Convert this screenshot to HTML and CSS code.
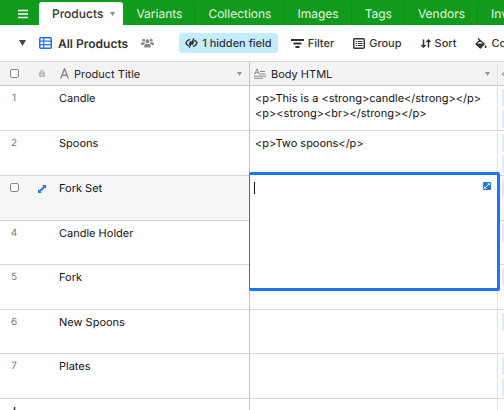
FILE: index.html
```html
<!DOCTYPE html>
<html lang="en">
<head>
  <meta charset="UTF-8" />
  <meta name="viewport" content="width=device-width, initial-scale=1.0"/>
  <title>Products - All Products</title>
  <link rel="stylesheet" href="styles.css">
</head>
<body>
  <nav class="tabs">
    <button type="button" class="menu-btn" aria-label="Menu">
      <svg width="10" height="10" viewBox="0 0 10 10"><path d="M0 1.5h10M0 5h10M0 8.5h10" stroke="#fff" stroke-width="1.6"/></svg>
    </button>
    <a href="#products" class="tab active">Products
      <svg width="5" height="4" viewBox="0 0 5 4"><path d="M0 0h5L2.5 4z" fill="#888"/></svg>
    </a>
    <a href="#variants" class="tab">Variants</a>
    <a href="#collections" class="tab">Collections</a>
    <a href="#images" class="tab">Images</a>
    <a href="#tags" class="tab">Tags</a>
    <a href="#vendors" class="tab">Vendors</a>
    <a href="#inventory" class="tab">Inventory</a>
  </nav>

  <div class="toolbar">
    <button type="button" class="view-btn">
      <svg class="caret" width="7" height="6" viewBox="0 0 7 6"><path d="M0 0h7L3.5 6z" fill="#444"/></svg>
      <svg width="13" height="12" viewBox="0 0 13 12"><rect x=".75" y=".75" width="11.5" height="10.5" rx="1" fill="none" stroke="#1f74f5" stroke-width="1.5"/><path d="M1 4.2h11M1 7.7h11M4.8 1v10" stroke="#1f74f5" stroke-width="1.2"/></svg>
      <span class="view-name">All Products</span>
      <svg width="13" height="10" viewBox="0 0 13 10" fill="#888"><circle cx="6.5" cy="3.2" r="1.9"/><circle cx="2.7" cy="2.2" r="1.4"/><circle cx="10.3" cy="2.2" r="1.4"/><path d="M3.2 9.5V8c0-1.3.9-2.2 2.2-2.2h2.2c1.3 0 2.2.9 2.2 2.2v1.5zM0 7V5.8C0 4.8.7 4.2 1.7 4.2h2l.5 1C3 5.7 2.6 6.2 2.4 7zM13 7V5.8c0-1-.7-1.6-1.7-1.6h-2l-.5 1c1.2.5 1.6 1 1.8 1.8z"/></svg>
    </button>
    <button type="button" class="tool hidden-fields">
      <svg width="13" height="10" viewBox="0 0 13 10" fill="none" stroke="#333" stroke-width="1.4" stroke-linecap="round"><path d="M4.5 1.7C3 2.2 1.7 3.3.8 5c.6 1.1 1.4 2 2.4 2.6M8.5 8.3C10 7.8 11.3 6.7 12.2 5c-.6-1.1-1.4-2-2.4-2.6M8.7.8 4.3 9.2M5.6 3.8 4.4 6.2M8.6 3.8 7.4 6.2"/></svg>
      1 hidden field
    </button>
    <button type="button" class="tool filter">
      <svg width="13" height="9" viewBox="0 0 13 9"><path d="M0 1h13M2.5 4.5h8M4.5 8h4" stroke="#333" stroke-width="1.8"/></svg>
      Filter
    </button>
    <button type="button" class="tool group">
      <svg width="12" height="11" viewBox="0 0 12 11" fill="none" stroke="#333"><rect x=".75" y=".75" width="10.5" height="9.5" rx="1" stroke-width="1.4"/><path d="M2.7 3.5h1.4M5 3.5h4.4M2.7 5.5h1.4M5 5.5h4.4M2.7 7.5h1.4M5 7.5h4.4"/></svg>
      Group
    </button>
    <button type="button" class="tool sort">
      <svg width="10" height="9" viewBox="0 0 10 9" fill="none" stroke="#333" stroke-width="1.5"><path d="M2.5.5v7.5M.5 6l2 2 2-2M7.5 8.5V1M5.5 3l2-2 2 2"/></svg>
      Sort
    </button>
    <button type="button" class="tool color">
      <svg width="12" height="11" viewBox="0 0 12 11"><path d="M3 .6 9.2 6 5.4 10 1 6l3.9-3.7" fill="none" stroke="#333" stroke-width="1.3" stroke-linejoin="round"/><path d="M1 5.6h8.2L5.4 10z" fill="#333"/><path d="M10.6 7c.6.9 1 1.5 1 2.1a1 1 0 0 1-2 0c0-.6.4-1.2 1-2.1z" fill="#333"/></svg>
      Color
    </button>
  </div>

  <table class="grid">
    <colgroup>
      <col class="col-num"><col class="col-icon"><col class="col-title"><col class="col-body"><col>
    </colgroup>
    <thead>
      <tr>
        <th class="num"><input type="checkbox" aria-label="Select all rows"></th>
        <th class="icon"><svg width="6" height="7" viewBox="0 0 6 7"><path d="M1.5 3V2a1.5 1.5 0 0 1 3 0v1" fill="none" stroke="#aaa"/><rect x=".5" y="3" width="5" height="3.5" fill="#ccc" stroke="#aaa" stroke-width=".8"/></svg></th>
        <th class="title">
          <div class="field">
            <svg width="9" height="11" viewBox="0 0 9 11"><path d="M.7 10.5 4.5.8l3.8 9.7M2 7.2h5" fill="none" stroke="#888" stroke-width="1.4"/></svg>
            <span>Product Title</span>
            <svg class="drop" width="5" height="4" viewBox="0 0 5 4"><path d="M0 0h5L2.5 4z" fill="#999"/></svg>
          </div>
        </th>
        <th class="body">
          <div class="field">
            <svg width="12" height="11" viewBox="0 0 12 11" fill="none" stroke="#888"><path d="M.6 6.5 3 .8l2.4 5.7M1.4 4.7h3.2M6 3.5h5M6 6h5.5M0 8.2h12M0 10.3h9"/></svg>
            <span>Body HTML</span>
            <svg class="drop" width="5" height="4" viewBox="0 0 5 4"><path d="M0 0h5L2.5 4z" fill="#999"/></svg>
          </div>
        </th>
        <th class="links"><svg width="6" height="6" viewBox="0 0 6 6"><path d="M0 3h6M2 1 0 3l2 2" fill="none" stroke="#999"/></svg></th>
      </tr>
    </thead>
    <tbody>
      <tr>
        <td class="num">1</td><td class="icon"></td><td class="title">Candle</td>
        <td class="body">&lt;p&gt;This is a &lt;strong&gt;candle&lt;/strong&gt;&lt;/p&gt;<br>&lt;p&gt;&lt;strong&gt;&lt;br&gt;&lt;/strong&gt;&lt;/p&gt;</td>
        <td class="links"><span class="pill"></span><span class="pill"></span></td>
      </tr>
      <tr>
        <td class="num">2</td><td class="icon"></td><td class="title">Spoons</td>
        <td class="body">&lt;p&gt;Two spoons&lt;/p&gt;</td>
        <td class="links"><span class="pill"></span><span class="pill"></span></td>
      </tr>
      <tr class="current">
        <td class="num"><input type="checkbox" aria-label="Select Fork Set"></td>
        <td class="icon"><svg width="8" height="8" viewBox="0 0 8 8"><path d="M4.3 0H8v3.7zM0 4.3V8h3.7z" fill="#1f74f5"/><path d="M1.5 6.5l5-5" stroke="#1f74f5" stroke-width="1.8"/></svg></td>
        <td class="title">Fork Set</td>
        <td class="body">
          <div class="editor">
            <textarea aria-label="Body HTML"></textarea>
            <span class="cursor"></span>
            <button type="button" class="expand" aria-label="Expand">
              <svg width="8" height="8" viewBox="0 0 8 8"><path d="M4.2 1.2h2.6v2.6zM1.2 4.2v2.6h2.6z" fill="#fff"/><path d="M2.3 5.7l3.4-3.4" stroke="#fff"/></svg>
            </button>
          </div>
        </td>
        <td class="links"><span class="pill"></span></td>
      </tr>
      <tr>
        <td class="num">4</td><td class="icon"></td><td class="title">Candle Holder</td><td class="body"></td>
        <td class="links"><span class="pill"></span></td>
      </tr>
      <tr>
        <td class="num">5</td><td class="icon"></td><td class="title">Fork</td><td class="body"></td>
        <td class="links"><span class="pill"></span></td>
      </tr>
      <tr>
        <td class="num">6</td><td class="icon"></td><td class="title">New Spoons</td><td class="body"></td>
        <td class="links"><span class="pill"></span></td>
      </tr>
      <tr>
        <td class="num">7</td><td class="icon"></td><td class="title">Plates</td><td class="body"></td>
        <td class="links"><span class="pill"></span><span class="pill"></span></td>
      </tr>
      <tr>
        <td class="num add"><button type="button" aria-label="Add row"><svg width="9" height="9" viewBox="0 0 9 9"><path d="M4.5 0v9M0 4.5h9" stroke="#333" stroke-width="1.5"/></svg></button></td>
        <td class="icon"></td><td class="title"></td><td class="body"></td>
        <td class="links"></td>
      </tr>
    </tbody>
  </table>
</body>
</html>
```
FILE: styles.css
```css
:root {
  --green: #119a1b;
  --blue: #1f74f5;
  --text: #333;
  --line: #d6d8d8;
}

* {
  box-sizing: border-box;
}

body {
  margin: 0;
  height: 100vh;
  overflow: hidden;
  font-family: Inter, "Liberation Sans", sans-serif;
  font-size: 11px;
  text-rendering: geometricPrecision;
  color: var(--text);
  background: #fff;
}

button {
  display: flex;
  align-items: center;
  padding: 0;
  border: none;
  background: none;
  font: inherit;
  text-rendering: inherit;
  color: inherit;
  white-space: nowrap;
  cursor: pointer;
}

svg {
  display: block;
  flex: none;
}

.tabs {
  display: flex;
  height: 25px;
  padding-top: 2px;
  background: var(--green);
  font-size: 12px;
  overflow: hidden;
}

.menu-btn {
  flex: none;
  width: 39px;
  padding-left: 18px;
}

.tab {
  display: flex;
  flex: none;
  align-items: center;
  padding: 0 12px 0 13px;
  border-right: 1px solid #0b8f16;
  color: #e3f5e4;
  text-decoration: none;
}

.tab.active {
  gap: 7px;
  padding: 0 8px 0 13px;
  border: none;
  border-radius: 3px 3px 0 0;
  background: #fff;
  color: var(--text);
  font-weight: 500;
}

.toolbar {
  display: flex;
  align-items: center;
  height: 36px;
  padding-left: 19px;
  overflow: hidden;
}

.view-btn {
  gap: 13px;
  margin-right: 25px;
  font-size: 12px;
}

.view-name {
  margin-left: -7px;
  font-weight: 600;
}

.tool {
  flex: none;
  gap: 4px;
  margin-right: 19px;
  font-weight: 500;
}

.hidden-fields {
  height: 20px;
  margin-right: 13px;
  padding: 0 6px;
  border-radius: 3px;
  background: #c4ecff;
}

.grid {
  width: 100%;
  table-layout: fixed;
  border-collapse: separate;
  border-spacing: 0;
}

.col-num {
  width: 28px;
}

.col-icon {
  width: 28px;
}

.col-title {
  width: 194px;
}

.col-body {
  width: 248px;
}

th {
  height: 25px;
  padding: 0;
  border-top: 1px solid var(--line);
  border-bottom: 1px solid #c8c8c8;
  background: #f3f3f3;
  font-weight: 400;
  text-align: left;
}

td {
  height: 45px;
  padding: 5px 0 0;
  border-bottom: 1px solid var(--line);
  line-height: 15px;
  vertical-align: top;
}

/* keeps the average row just under 45px */
tbody tr:nth-child(2n+4) td {
  height: 44px;
}

.num {
  text-align: center;
}

td.num {
  color: #777;
  font-size: 10px;
}

.add button {
  margin: 3px auto 0;
}

input[type="checkbox"] {
  appearance: none;
  display: block;
  width: 9px;
  height: 9px;
  margin: 0 auto;
  border: 1px solid #888;
  border-radius: 2px;
  background: #fff;
}

td input[type="checkbox"] {
  margin-top: 2px;
}

.icon svg {
  margin: 0 auto;
}

td.icon svg {
  margin-top: 4px;
}

.title {
  padding-left: 3px;
  border-right: 1px solid #c4c4c4;
}

.body {
  padding-left: 5px;
  border-right: 1px solid #e2e2e6;
}

td.title,
td.body {
  color: #111;
}

td.body {
  position: relative;
}

th.title,
th.body {
  padding-left: 4px;
  color: #222;
}

.field {
  display: flex;
  align-items: center;
  gap: 5px;
}

.drop {
  margin: 0 7px 0 auto;
}

.links {
  padding-left: 4px;
  overflow: hidden;
}

.pill {
  display: block;
  height: 18px;
  margin-bottom: 3px;
  border-radius: 3px;
  background: #e1e8fa;
}

td.links {
  padding-top: 3px;
}

.pill:last-child {
  margin-bottom: 0;
}

.current td {
  background: #f6f6f6;
}

.editor {
  position: absolute;
  z-index: 2;
  top: -4px;
  left: -1px;
  width: 251px;
  height: 119px;
  border: 3px solid var(--blue);
  border-left-width: 1px;
  border-radius: 2px;
  background: #fff;
}

.editor textarea {
  display: block;
  width: 100%;
  height: 100%;
  padding: 5px;
  border: none;
  outline: none;
  resize: none;
  font: inherit;
}

.cursor {
  position: absolute;
  top: 7px;
  left: 4px;
  width: 1px;
  height: 12px;
  background: #111;
}

.expand {
  position: absolute;
  top: 7px;
  right: 6px;
  justify-content: center;
  width: 8px;
  height: 8px;
  border-radius: 1px;
  background: var(--blue);
}
```
